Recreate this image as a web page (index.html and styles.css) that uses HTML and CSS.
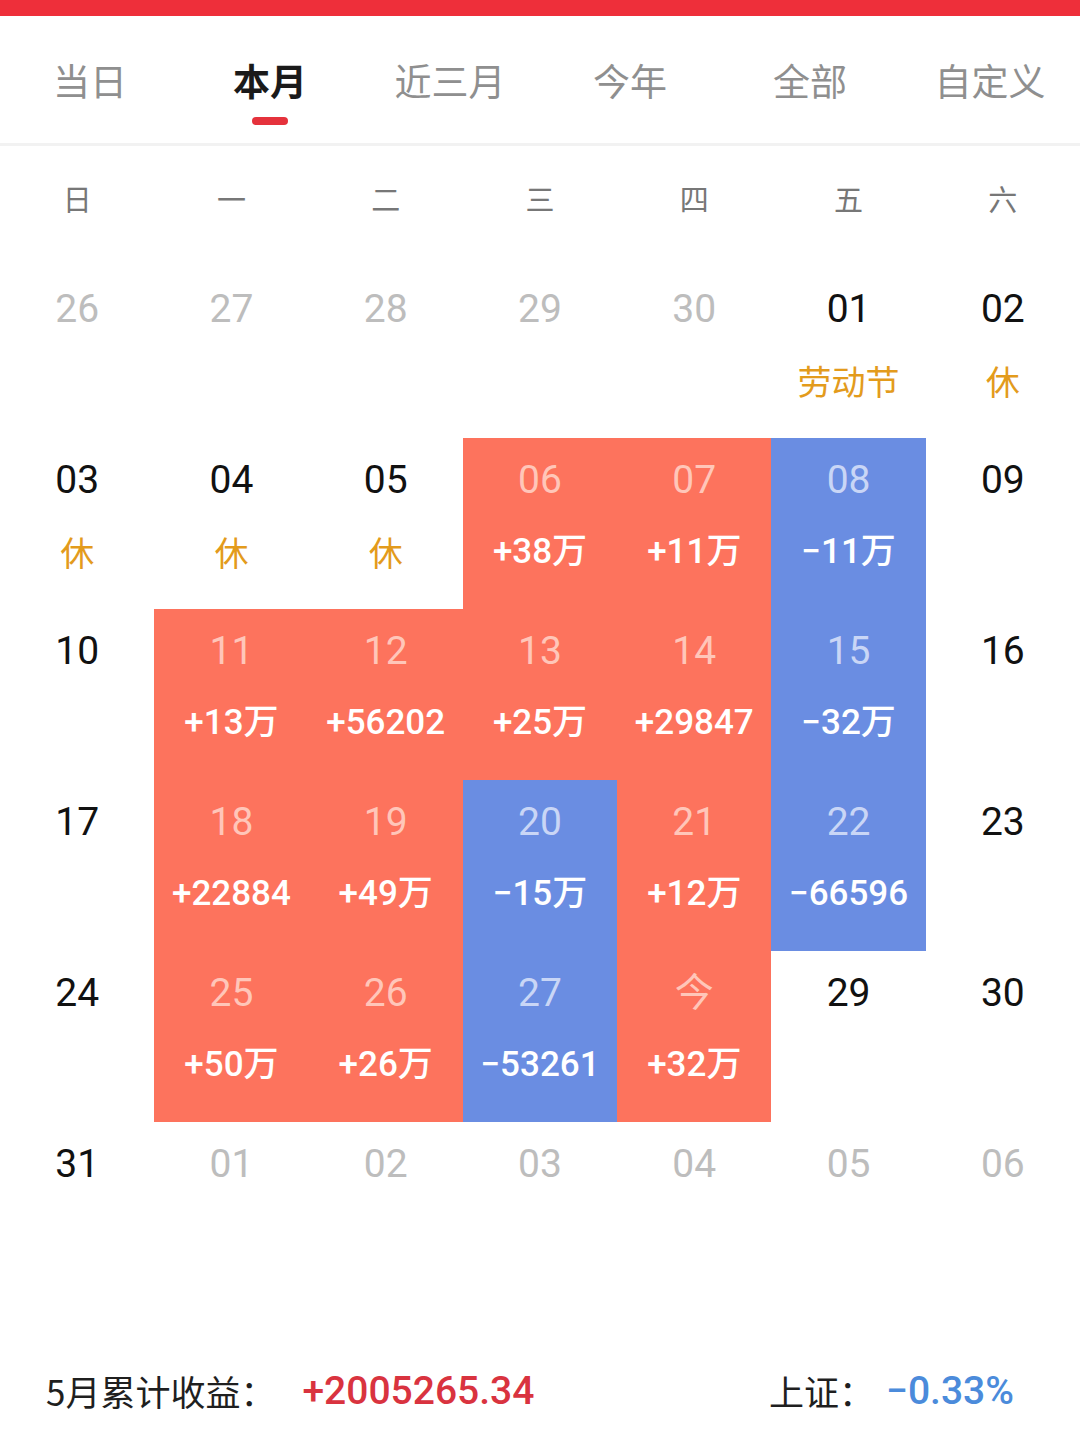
FILE: index.html
```html
<!DOCTYPE html>
<html lang="zh">
<head>
<meta charset="utf-8">
<link rel="stylesheet" href="styles.css">
</head>
<body>
<div class="topbar"></div>
<nav class="tabs">
  <div class="tab"><span class="tab-label">当日</span><span class="tab-line"></span></div>
  <div class="tab active"><span class="tab-label">本月</span><span class="tab-line"></span></div>
  <div class="tab"><span class="tab-label">近三月</span><span class="tab-line"></span></div>
  <div class="tab"><span class="tab-label">今年</span><span class="tab-line"></span></div>
  <div class="tab"><span class="tab-label">全部</span><span class="tab-line"></span></div>
  <div class="tab"><span class="tab-label">自定义</span><span class="tab-line"></span></div>
</nav>
<div class="weekdays">
  <span>日</span><span>一</span><span>二</span><span>三</span><span>四</span><span>五</span><span>六</span>
</div>
<div class="calendar">
  <div class="cell muted"><span class="num">26</span></div>
  <div class="cell muted"><span class="num">27</span></div>
  <div class="cell muted"><span class="num">28</span></div>
  <div class="cell muted"><span class="num">29</span></div>
  <div class="cell muted"><span class="num">30</span></div>
  <div class="cell"><span class="num">01</span><span class="holiday">劳动节</span></div>
  <div class="cell"><span class="num">02</span><span class="holiday">休</span></div>

  <div class="cell"><span class="num">03</span><span class="holiday">休</span></div>
  <div class="cell"><span class="num">04</span><span class="holiday">休</span></div>
  <div class="cell"><span class="num">05</span><span class="holiday">休</span></div>
  <div class="cell up"><span class="num">06</span><span class="val">+38万</span></div>
  <div class="cell up"><span class="num">07</span><span class="val">+11万</span></div>
  <div class="cell down"><span class="num">08</span><span class="val">−11万</span></div>
  <div class="cell"><span class="num">09</span></div>

  <div class="cell"><span class="num">10</span></div>
  <div class="cell up"><span class="num">11</span><span class="val">+13万</span></div>
  <div class="cell up"><span class="num">12</span><span class="val">+56202</span></div>
  <div class="cell up"><span class="num">13</span><span class="val">+25万</span></div>
  <div class="cell up"><span class="num">14</span><span class="val">+29847</span></div>
  <div class="cell down"><span class="num">15</span><span class="val">−32万</span></div>
  <div class="cell"><span class="num">16</span></div>

  <div class="cell"><span class="num">17</span></div>
  <div class="cell up"><span class="num">18</span><span class="val">+22884</span></div>
  <div class="cell up"><span class="num">19</span><span class="val">+49万</span></div>
  <div class="cell down"><span class="num">20</span><span class="val">−15万</span></div>
  <div class="cell up"><span class="num">21</span><span class="val">+12万</span></div>
  <div class="cell down"><span class="num">22</span><span class="val">−66596</span></div>
  <div class="cell"><span class="num">23</span></div>

  <div class="cell"><span class="num">24</span></div>
  <div class="cell up"><span class="num">25</span><span class="val">+50万</span></div>
  <div class="cell up"><span class="num">26</span><span class="val">+26万</span></div>
  <div class="cell down"><span class="num">27</span><span class="val">−53261</span></div>
  <div class="cell up"><span class="num">今</span><span class="val">+32万</span></div>
  <div class="cell"><span class="num">29</span></div>
  <div class="cell"><span class="num">30</span></div>

  <div class="cell"><span class="num">31</span></div>
  <div class="cell muted"><span class="num">01</span></div>
  <div class="cell muted"><span class="num">02</span></div>
  <div class="cell muted"><span class="num">03</span></div>
  <div class="cell muted"><span class="num">04</span></div>
  <div class="cell muted"><span class="num">05</span></div>
  <div class="cell muted"><span class="num">06</span></div>
</div>
<footer class="summary">
  <div class="sum-item"><span class="sum-label sum-label-wide">5月累计收益：</span><span class="sum-up">+2005265.34</span></div>
  <div class="sum-item"><span class="sum-label">上证：</span><span class="sum-down">−0.33%</span></div>
</footer>
</body>
</html>
```

FILE: styles.css
```css
* { box-sizing: border-box; }
html, body {
  margin: 0;
  padding: 0;
  background: #ffffff;
  font-family: Roboto, "Noto Sans CJK SC", sans-serif;
  width: 1080px;
}
.topbar {
  height: 16px;
  background: #ee2f3a;
}
.tabs {
  display: grid;
  grid-template-columns: repeat(6, 1fr);
  padding: 40px 0 18px;
  border-bottom: 3px solid #f2f2f2;
}
.tab {
  display: flex;
  flex-direction: column;
  align-items: center;
}
.tab-label {
  font-family: "Noto Sans CJK SC", sans-serif;
  font-size: 37px;
  line-height: 48px;
  color: #8f8f8f;
}
.tab-line {
  width: 36px;
  height: 8px;
  margin-top: 13px;
  border-radius: 4px;
  background: transparent;
}
.tab.active .tab-label {
  color: #1a1a1a;
  font-weight: 700;
}
.tab.active .tab-line {
  background: #e5323c;
}
.weekdays {
  display: grid;
  grid-template-columns: repeat(7, 1fr);
  height: 121px;
  padding-top: 32px;
}
.weekdays span {
  text-align: center;
  font-family: "Noto Sans CJK SC", sans-serif;
  font-size: 29px;
  line-height: 40px;
  color: #777777;
}
.calendar {
  display: grid;
  grid-template-columns: repeat(7, 1fr);
  grid-auto-rows: 171px;
}
.cell {
  display: flex;
  flex-direction: column;
  align-items: center;
  padding-top: 18px;
}
.num {
  font-size: 39px;
  line-height: 48px;
  color: #111111;
}
.muted .num { color: #bdbdbd; }
.holiday {
  margin-top: 24px;
  font-family: "Noto Sans CJK SC", sans-serif;
  font-size: 34px;
  line-height: 48px;
  color: #e39b1c;
}
.val {
  margin-top: 24px;
  font-size: 35px;
  line-height: 48px;
  font-weight: 500;
  color: #ffffff;
}
.up { background: #fd735d; }
.up .num { color: #ffc6b9; }
.down { background: #6a8de2; }
.down .num { color: #c9d6f6; }
.summary {
  display: flex;
  justify-content: space-between;
  padding: 74px 66px 0 46px;
  height: 158px;
}
.sum-item {
  display: flex;
  align-items: center;
  height: 48px;
}
.sum-label {
  font-family: "Noto Sans CJK SC", sans-serif;
  font-size: 35px;
  line-height: 48px;
  color: #1f1f1f;
  margin-right: 12px;
}
.sum-label-wide {
  margin-right: 27px;
}
.sum-up,
.sum-down {
  font-size: 39px;
  line-height: 48px;
  font-weight: 500;
}
.sum-up { color: #d9333f; }
.sum-down { color: #4b8bdb; }
```
